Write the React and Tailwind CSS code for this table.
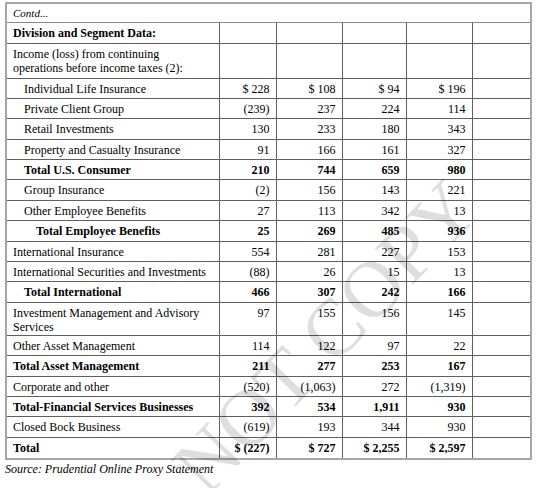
import React from "react";

const rows = [
  { label: "Individual Life Insurance", indent: 1, vals: ["$ 228", "$ 108", "$ 94", "$ 196"] },
  { label: "Private Client Group", indent: 1, vals: ["(239)", "237", "224", "114"] },
  { label: "Retail Investments", indent: 1, vals: ["130", "233", "180", "343"] },
  { label: "Property and Casualty Insurance", indent: 1, vals: ["91", "166", "161", "327"] },
  { label: "Total U.S. Consumer", indent: 1, bold: true, vals: ["210", "744", "659", "980"] },
  { label: "Group Insurance", indent: 1, vals: ["(2)", "156", "143", "221"] },
  { label: "Other Employee Benefits", indent: 1, vals: ["27", "113", "342", "13"] },
  { label: "Total Employee Benefits", indent: 2, bold: true, vals: ["25", "269", "485", "936"] },
  { label: "International Insurance", vals: ["554", "281", "227", "153"] },
  { label: "International Securities and Investments", vals: ["(88)", "26", "15", "13"] },
  { label: "Total International", indent: 1, bold: true, vals: ["466", "307", "242", "166"] },
  { label: "Investment Management and Advisory Services", tall: true, vals: ["97", "155", "156", "145"] },
  { label: "Other Asset Management", vals: ["114", "122", "97", "22"] },
  { label: "Total Asset Management", bold: true, vals: ["211", "277", "253", "167"] },
  { label: "Corporate and other", vals: ["(520)", "(1,063)", "272", "(1,319)"] },
  { label: "Total-Financial Services Businesses", bold: true, vals: ["392", "534", "1,911", "930"] },
  { label: "Closed Bock Business", vals: ["(619)", "193", "344", "930"] },
  { label: "Total", bold: true, last: true, vals: ["$ (227)", "$ 727", "$ 2,255", "$ 2,597"] },
];

const serif = "font-['Liberation_Serif','Times_New_Roman',serif]";
const cell = `border-r border-b border-[#5f5f5f] align-top pt-[3px] leading-[14px] text-[12px] ${serif}`;
const indents = ["pl-[6px]", "pl-[17px]", "pl-[29px]"];

const App = () => {
  return (
    <div className={`relative w-[543px] h-[488px] overflow-hidden bg-white text-black text-[12px] ${serif}`}>
      <div className="ml-[5px] mt-[2px] w-[527px] border-2 border-[#a6a6a6]">
        <table className={`w-full table-fixed border-collapse text-[12px] ${serif}`}>
          <colgroup>
            <col className="w-[212px]" />
            <col className="w-[57px]" />
            <col className="w-[66px]" />
            <col className="w-[64px]" />
            <col className="w-[66px]" />
            <col className="w-[58px]" />
          </colgroup>
          <tbody>
            <tr className="h-[18px]">
              <td colSpan={6} className={`border-b border-[#8a8a8a] pl-[6px] text-[11px] italic leading-[14px] align-middle ${serif}`}>
                Contd...
              </td>
            </tr>
            <tr className="h-[21px]">
              <td className={`${cell} pl-[6px] font-bold`}>Division and Segment Data:</td>
              <td className={cell}></td>
              <td className={cell}></td>
              <td className={cell}></td>
              <td className={cell}></td>
              <td className="border-b border-[#5f5f5f]"></td>
            </tr>
            <tr className="h-[35px]">
              <td className={`${cell} pl-[6px]`}>
                Income (loss) from continuing
                <br />
                operations before income taxes (2):
              </td>
              <td className={cell}></td>
              <td className={cell}></td>
              <td className={cell}></td>
              <td className={cell}></td>
              <td className="border-b border-[#5f5f5f]"></td>
            </tr>
            {rows.map((r) => (
              <tr key={r.label} className={r.tall ? "h-[33px]" : "h-[20.4px]"}>
                <td className={`${cell} ${indents[r.indent || 0]} pr-[4px] ${r.bold ? "font-bold" : ""} ${r.last ? "border-b-0" : ""}`}>
                  {r.label}
                </td>
                {r.vals.map((v, i) => (
                  <td
                    key={i}
                    className={`${cell} pr-[6px] text-right whitespace-nowrap ${r.bold ? "font-bold" : ""} ${r.last ? "border-b-0" : ""}`}
                  >
                    {v}
                  </td>
                ))}
                <td className={`border-b border-[#5f5f5f] ${r.last ? "border-b-0" : ""}`}></td>
              </tr>
            ))}
          </tbody>
        </table>
      </div>
      <p className="ml-[5px] mt-[2px] italic leading-[14px]">Source: Prudential Online Proxy Statement</p>

      {/* watermark */}
      <div className="pointer-events-none absolute left-[325px] top-[337px] -translate-x-1/2 -translate-y-1/2 -rotate-[46deg] whitespace-nowrap text-[80px] leading-none text-[rgba(0,0,0,0.13)]">
        NOT COPY
      </div>
    </div>
  );
};

export default App;
